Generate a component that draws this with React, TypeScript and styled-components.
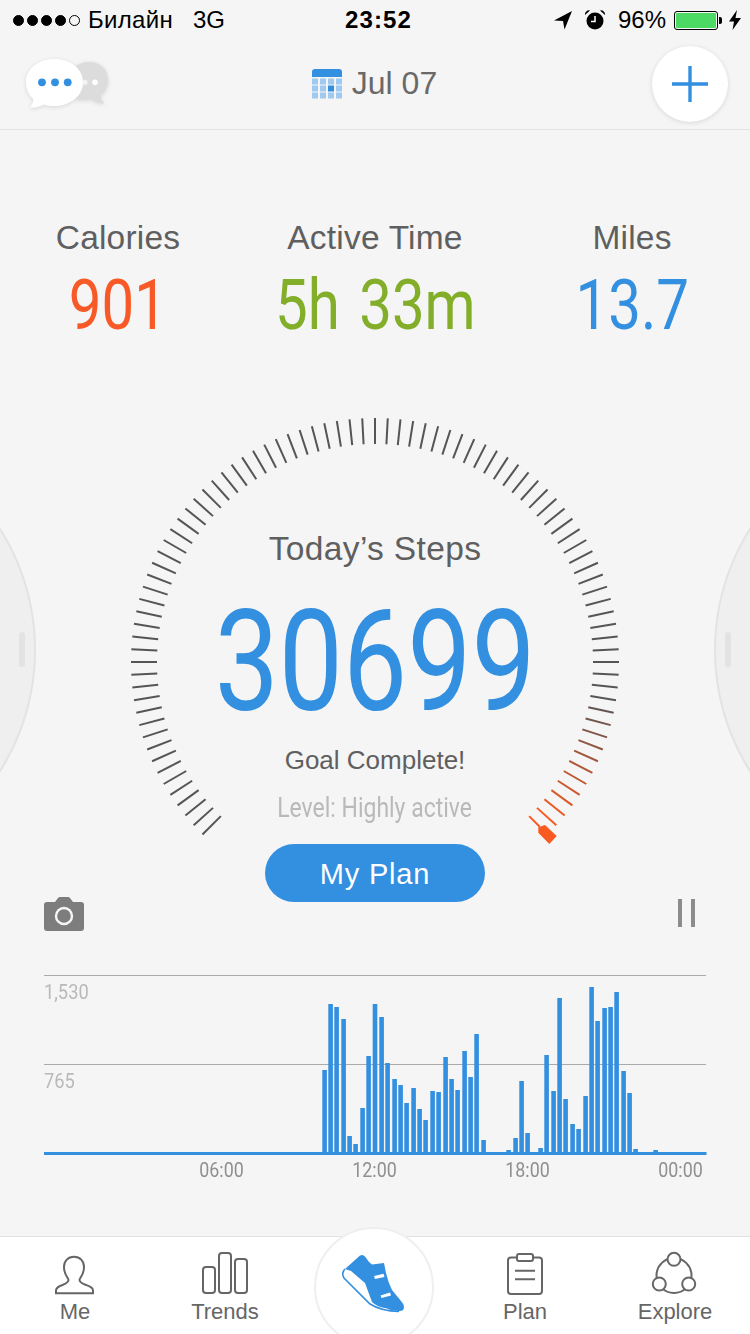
import React from 'react'
import styled, {createGlobalStyle} from 'styled-components'

const BLUE = '#338fe0'
const TEXT = '#5f5f5f'
const FONT = `"Liberation Sans", Arial, sans-serif`
const NUMBER_FONT = `Roboto, "Liberation Sans", sans-serif`

const GlobalStyle = createGlobalStyle`
    html, body {
        margin: 0;
        padding: 0;
        background: #f5f5f5;
    }
`

const Page = styled.div`
    width: 750px;
    height: 1334px;
    background: #f5f5f5;
    display: flex;
    flex-direction: column;
    overflow: hidden;
    font-family: ${FONT};
    color: ${TEXT};
`

/* status bar */
const StatusBar = styled.div`
    height: 40px;
    flex-shrink: 0;
    display: flex;
    align-items: center;
    justify-content: space-between;
    padding: 0 9px 0 13px;
    box-sizing: border-box;
    font-size: 24px;
    color: #000;
    position: relative;
`
const StatusGroup = styled.div`
    display: flex;
    align-items: center;
`
const SignalDot = styled.span<{$empty?: boolean}>`
    width: 11px;
    height: 11px;
    margin-right: 3px;
    border-radius: 50%;
    box-sizing: border-box;
    border: 1px solid #000;
    background: ${p => (p.$empty ? 'transparent' : '#000')};
`
const Carrier = styled.span`
    margin-left: 5px;
    letter-spacing: 0.3px;
`
const Network = styled.span`
    margin-left: 20px;
`
const Clock = styled.span`
    position: absolute;
    left: 345px;
    font-weight: 700;
    letter-spacing: 1.1px;
`
const BatteryText = styled.span`
    margin: 0 8px 0 12px;
`
const BatteryShell = styled.span`
    width: 44px;
    height: 19px;
    box-sizing: border-box;
    border: 1px solid #000;
    border-radius: 3px;
    padding: 1px;
    display: flex;
    position: relative;
`
const BatteryLevel = styled.span`
    flex: 1;
    background: #4cd964;
    border-radius: 1px;
`
const BatteryNub = styled.span`
    width: 3px;
    height: 7px;
    background: #000;
    border-radius: 0 2px 2px 0;
    margin: 0 7px 0 1px;
`

/* header */
const Header = styled.div`
    height: 90px;
    flex-shrink: 0;
    box-sizing: border-box;
    border-bottom: 1px solid #e2e2e2;
    display: grid;
    grid-template-columns: 1fr auto 1fr;
    align-items: center;
    padding: 0 22px 0 20px;
`
const BubbleIcon = styled.svg`
    display: block;
    margin-top: 2px;
    filter: drop-shadow(0 1px 2px rgba(0, 0, 0, 0.12));
`
const DateBox = styled.div`
    display: flex;
    align-items: center;
    gap: 10px;
    margin: -2px 0 0 1px;
    font-size: 32px;
    color: #696969;
`
const PlusButton = styled.button`
    justify-self: end;
    width: 76px;
    height: 76px;
    padding: 0;
    border: 0;
    border-radius: 50%;
    background: #fff;
    box-shadow: 0 1px 5px rgba(0, 0, 0, 0.12);
    display: flex;
    align-items: center;
    justify-content: center;
    margin-top: -2px;
`

/* stats */
const Stats = styled.div`
    height: 270px;
    flex-shrink: 0;
    box-sizing: border-box;
    padding-top: 88px;
    display: grid;
    grid-template-columns: repeat(3, 257px);
    justify-content: center;
    align-content: start;
`
const Stat = styled.div`
    display: flex;
    flex-direction: column;
    align-items: center;
`
const StatLabel = styled.div`
    font-size: 33.5px;
    line-height: 40px;
    letter-spacing: 0.2px;
    color: ${TEXT};
`
const StatValue = styled.div<{$color: string}>`
    margin-top: 9px;
    font-family: ${NUMBER_FONT};
    font-size: 71px;
    line-height: 76px;
    white-space: nowrap;
    word-spacing: 6px;
    color: ${p => p.$color};
    transform: scaleX(0.82);
`

/* gauge */
const GaugeSection = styled.div`
    position: relative;
    height: 502px;
    flex-shrink: 0;
    box-sizing: border-box;
    padding-top: 129px;
    display: flex;
    flex-direction: column;
    align-items: center;
`
const Dial = styled.svg`
    position: absolute;
    left: 0;
    top: 0;
`
const SidePeek = styled.div<{$side: 'left' | 'right'}>`
    position: absolute;
    top: 22px;
    ${p => p.$side}: -420px;
    width: 456px;
    height: 456px;
    box-sizing: border-box;
    border-radius: 50%;
    background: #efefef;
    border: 2px solid #e3e3e3;
`
const PeekHandle = styled.span<{$side: 'left' | 'right'}>`
    position: absolute;
    top: 208px;
    ${p => p.$side}: 437px;
    width: 6px;
    height: 35px;
    border-radius: 3px;
    background: #e3e3e3;
`
const GaugeTitle = styled.div`
    font-size: 33.5px;
    line-height: 40px;
    letter-spacing: 0.35px;
    position: relative;
`
const StepCount = styled.div`
    margin-top: 33px;
    font-family: ${NUMBER_FONT};
    font-size: 141px;
    line-height: 120px;
    color: ${BLUE};
    transform: scaleX(0.81);
    position: relative;
`
const GoalText = styled.div`
    margin-top: 22px;
    font-size: 26px;
    line-height: 32px;
    position: relative;
`
const LevelText = styled.div`
    margin-top: 16px;
    font-family: ${NUMBER_FONT};
    font-size: 27px;
    line-height: 32px;
    color: #b9b9b9;
    white-space: nowrap;
    transform: scaleX(0.85);
    position: relative;
`
const PlanButton = styled.button`
    margin-top: 20px;
    width: 220px;
    height: 58px;
    flex-shrink: 0;
    padding: 2px 0 0;
    border: 0;
    border-radius: 29px;
    background: ${BLUE};
    color: #fff;
    font-family: ${FONT};
    font-size: 29px;
    letter-spacing: 0.8px;
    position: relative;
`

/* toolbar */
const Toolbar = styled.div`
    margin-top: -5px;
    height: 35px;
    flex-shrink: 0;
    display: flex;
    align-items: center;
    justify-content: space-between;
    padding: 0 55px 0 44px;
`
const PauseIcon = styled.div`
    display: flex;
    gap: 8.5px;
    margin-top: -3px;
`
const PauseBar = styled.span`
    width: 4.5px;
    height: 28px;
    background: #8c8c8c;
`

/* chart */
const ChartBox = styled.div`
    position: relative;
    margin-top: 38px;
    height: 190px;
    flex-shrink: 0;
`
const ChartSvg = styled.svg`
    display: block;
`
const YLabel = styled.span<{$top: number}>`
    position: absolute;
    left: 44px;
    top: ${p => p.$top}px;
    font-family: ${NUMBER_FONT};
    font-size: 21px;
    line-height: 24px;
    color: #b9b9b9;
    transform: scaleX(0.87);
    transform-origin: left center;
`
const TimeAxis = styled.div`
    margin-top: -2px;
    padding-left: 145px;
    display: grid;
    grid-template-columns: repeat(4, 153px);
`
const TimeLabel = styled.span`
    text-align: center;
    font-family: ${NUMBER_FONT};
    font-size: 21px;
    line-height: 24px;
    color: #8f8f8f;
    transform: scaleX(0.85);
`

/* bottom nav */
const Nav = styled.div`
    margin-top: auto;
    height: 98px;
    flex-shrink: 0;
    box-sizing: border-box;
    background: #fff;
    border-top: 1px solid #e2e2e2;
    display: grid;
    grid-template-columns: repeat(5, 150px);
    align-items: start;
`
const NavItem = styled.div`
    padding-top: 13px;
    display: flex;
    flex-direction: column;
    align-items: center;
`
const NavLabel = styled.span`
    font-size: 22px;
    line-height: 24px;
    color: #666;
`
const ShoeButton = styled.div`
    justify-self: center;
    margin: -10px 2px 0 0;
    width: 120px;
    height: 120px;
    box-sizing: border-box;
    padding-top: 11px;
    border-radius: 50%;
    background: #fff;
    border: 2px solid #efefef;
    display: flex;
    justify-content: center;
    align-items: flex-start;
`

const CENTER_X = 375
const CENTER_Y = 262

const tickColor = (i: number) => {
    // the last ticks fade from grey into the orange of the marker
    const t = Math.min(1, Math.max(0, (i - 78) / 11))
    const mix = (a: number, b: number) => Math.round(a + (b - a) * t)
    return `rgb(${mix(85, 248)},${mix(85, 90)},${mix(85, 34)})`
}

const ticks = Array.from({length: 91}, (_, i) => {
    const a = ((i * 3 - 135) * Math.PI) / 180
    const outer = i === 90 ? 218 + 15 : 244
    return {
        x1: CENTER_X + Math.sin(a) * outer,
        y1: CENTER_Y - Math.cos(a) * outer,
        x2: CENTER_X + Math.sin(a) * 218,
        y2: CENTER_Y - Math.cos(a) * 218,
        color: i === 90 ? '#f85a22' : tickColor(i),
    }
})

const bars: [number, number][] = [
    [324.6, 1070], [330.6, 1004], [336.6, 1007], [343.6, 1019], [349.6, 1136], [355.6, 1144],
    [362.6, 1108], [368.6, 1056], [375, 1004], [381.6, 1017], [387.6, 1063], [394.6, 1079],
    [400.6, 1085], [406.6, 1103], [413.6, 1088], [419.6, 1109], [425.6, 1120], [432.6, 1091],
    [438.6, 1092], [445.6, 1057], [451.6, 1079], [457.6, 1090], [464.6, 1051], [470.6, 1077],
    [476.6, 1034], [483.6, 1140], [508.6, 1150], [515.6, 1138], [521.6, 1081], [527.6, 1133],
    [540.6, 1148], [546.6, 1055], [553.6, 1091], [559.6, 998], [565.6, 1099], [572.6, 1124],
    [578.6, 1129], [585.6, 1096], [591.6, 987], [597.6, 1021], [604.6, 1008], [610.6, 1007],
    [616.6, 992], [623.6, 1071], [629.6, 1093], [635.6, 1149], [655.6, 1150],
]

const STROKE = {fill: 'none', stroke: '#666', strokeWidth: 2} as const

const App = () => {
    return (
        <Page>
            <GlobalStyle />
            <StatusBar>
                <StatusGroup>
                    <SignalDot />
                    <SignalDot />
                    <SignalDot />
                    <SignalDot />
                    <SignalDot $empty />
                    <Carrier>Билайн</Carrier>
                    <Network>3G</Network>
                </StatusGroup>
                <Clock>23:52</Clock>
                <StatusGroup>
                    <svg width="20" height="20" viewBox="0 0 20 20">
                        <path d="M19 1 L1 10.5 L10 11 L11.5 19.5 Z" fill="#000" />
                    </svg>
                    <svg width="22" height="22" viewBox="0 0 22 22" style={{marginLeft: 11}}>
                        <circle cx="11" cy="12" r="8.5" fill="#000" />
                        <path d="M11 7 V12.5 H7" fill="none" stroke="#fff" strokeWidth="1.5" />
                        <path d="M1 6 A4 4 0 0 1 6 1.5 Z M21 6 A4 4 0 0 0 16 1.5 Z" fill="#000" />
                    </svg>
                    <BatteryText>96%</BatteryText>
                    <BatteryShell>
                        <BatteryLevel />
                    </BatteryShell>
                    <BatteryNub />
                    <svg width="12" height="20" viewBox="0 0 12 20">
                        <path d="M8 0 L0 11.5 H5 L3.5 20 L12 8 H6.5 Z" fill="#000" />
                    </svg>
                </StatusGroup>
            </StatusBar>

            <Header>
                <BubbleIcon width="95" height="60" viewBox="0 0 95 60">
                    <path d="M56 10 C68 2 88 6 88 24 C88 32 84 37 80 40 C81 43 83 46 84 48 C78 47 74 45 71 43 C64 45 58 44 54 42 Z" fill="#dcdcdc" />
                    <circle cx="65" cy="26.3" r="2.6" fill="#f3f3f3" />
                    <circle cx="75" cy="26.3" r="2.8" fill="#fff" />
                    <path d="M34.5 3 C51 3 63 13 63 26.5 C63 40 50 50 34.5 50 C30 50 27 49.5 24 48.5 C20 51 15 51.5 10 51.5 C12 48.5 14 45.5 13 42.5 C8.5 38.5 6 33 6 26.5 C6 13 18 3 34.5 3 Z" fill="#fff" />
                    <circle cx="22" cy="26.3" r="3.9" fill={BLUE} />
                    <circle cx="35" cy="26.3" r="3.9" fill={BLUE} />
                    <circle cx="47.7" cy="26.3" r="3.9" fill={BLUE} />
                </BubbleIcon>
                <DateBox>
                    <svg width="30" height="30" viewBox="0 0 30 30">
                        <path d="M0 8 V3 A3 3 0 0 1 3 0 H27 A3 3 0 0 1 30 3 V8 Z" fill={BLUE} />
                        {[0, 1, 2].map(row =>
                            [0, 1, 2, 3].map(col => (
                                <rect
                                    key={`${row}-${col}`}
                                    x={col * 8}
                                    y={9.5 + row * 7}
                                    width="6"
                                    height="6"
                                    fill={row === 1 && col === 2 ? BLUE : '#a0c9ef'}
                                />
                            ))
                        )}
                    </svg>
                    <span>Jul 07</span>
                </DateBox>
                <PlusButton>
                    <svg width="38" height="38" viewBox="0 0 38 38">
                        <path d="M19 1 V37 M1 19 H37" stroke={BLUE} strokeWidth="3.4" fill="none" />
                    </svg>
                </PlusButton>
            </Header>

            <Stats>
                <Stat>
                    <StatLabel>Calories</StatLabel>
                    <StatValue $color="#f75a26">901</StatValue>
                </Stat>
                <Stat>
                    <StatLabel>Active Time</StatLabel>
                    <StatValue $color="#82ae2a">5h 33m</StatValue>
                </Stat>
                <Stat>
                    <StatLabel>Miles</StatLabel>
                    <StatValue $color={BLUE}>13.7</StatValue>
                </Stat>
            </Stats>

            <GaugeSection>
                <SidePeek $side="left">
                    <PeekHandle $side="left" />
                </SidePeek>
                <SidePeek $side="right">
                    <PeekHandle $side="right" />
                </SidePeek>
                <Dial width="750" height="502" viewBox="0 0 750 502">
                    {ticks.map((t, i) => (
                        <line key={i} x1={t.x1} y1={t.y1} x2={t.x2} y2={t.y2} stroke={t.color} strokeWidth="2" />
                    ))}
                    <path d="M538.3 427.3 L545 425 L556.7 436 L549.3 444 L538.3 432.7 Z" fill="#f85a22" />
                </Dial>
                <GaugeTitle>Today’s Steps</GaugeTitle>
                <StepCount>30699</StepCount>
                <GoalText>Goal Complete!</GoalText>
                <LevelText>Level: Highly active</LevelText>
                <PlanButton>My Plan</PlanButton>
            </GaugeSection>

            <Toolbar>
                <svg width="40" height="35" viewBox="0 0 40 35">
                    <path d="M3 5 H11 L14 1 Q15 0 16 0 H24 Q25 0 26 1 L29 5 H37 Q40 5 40 8 V31 Q40 34 37 34 H3 Q0 34 0 31 V8 Q0 5 3 5 Z" fill="#7d7d7d" />
                    <circle cx="20" cy="19" r="8" fill="none" stroke="#f5f5f5" strokeWidth="2.4" />
                </svg>
                <PauseIcon>
                    <PauseBar />
                    <PauseBar />
                </PauseIcon>
            </Toolbar>

            <ChartBox>
                <ChartSvg width="750" height="190" viewBox="0 970 750 190">
                    <line x1="44" x2="706" y1="975.5" y2="975.5" stroke="#aaa" strokeWidth="1" />
                    <line x1="44" x2="706" y1="1064.5" y2="1064.5" stroke="#aaa" strokeWidth="1" />
                    {bars.map(([x, top]) => (
                        <rect key={x} x={x - 2.3} y={top} width="4.6" height={1153 - top} fill={BLUE} />
                    ))}
                    <rect x="44" y="1152" width="662.5" height="3" fill={BLUE} />
                </ChartSvg>
                <YLabel $top={10}>1,530</YLabel>
                <YLabel $top={99}>765</YLabel>
            </ChartBox>
            <TimeAxis>
                <TimeLabel>06:00</TimeLabel>
                <TimeLabel>12:00</TimeLabel>
                <TimeLabel>18:00</TimeLabel>
                <TimeLabel>00:00</TimeLabel>
            </TimeAxis>

            <Nav>
                <NavItem>
                    <svg width="50" height="50" viewBox="0 0 50 50">
                        <path {...STROKE} d="M6 43.3 H43 V40.5 C43 37.5 40 36.5 36 35 C32 33.5 29.5 32 29.5 30 C29.5 28 34 25 34 17 C34 11 30 6.7 24 6.7 C18 6.7 14 11 14 17 C14 25 18.5 28 18.5 30 C18.5 32 16 33.5 12.5 35 C8.5 36.5 6 37.5 6 40.5 Z" />
                    </svg>
                    <NavLabel>Me</NavLabel>
                </NavItem>
                <NavItem>
                    <svg width="50" height="50" viewBox="0 0 50 50">
                        <rect {...STROKE} x="3" y="17" width="12" height="26" rx="3" />
                        <rect {...STROKE} x="19" y="3" width="12" height="40" rx="3" />
                        <rect {...STROKE} x="35" y="9" width="12" height="34" rx="3" />
                    </svg>
                    <NavLabel>Trends</NavLabel>
                </NavItem>
                <ShoeButton>
                    <svg width="90" height="90" viewBox="0 0 90 90">
                        <path d="M16 29 L31 15.5 Q34 14 36 16.5 L40 22 L43 24.5 L55 23 L57 33 Q59 42 63 50 L72 61 Q75 64 75 67 Q75 71.5 70 71 Q62 71 58 68.5 Q48 67 43 62 L36 43 L22 31 Z" fill={BLUE} />
                        <path d="M16 29 Q12 33 15 38 L41 64 Q52 71 70 71.5" fill="none" stroke={BLUE} strokeWidth="1.6" />
                        <path d="M45 36 L54.5 33.8 L55.5 37 L46 39 Z M51.5 55.5 L61 52.5 L62 55.5 L52.5 58 Z" fill="#fff" />
                    </svg>
                </ShoeButton>
                <NavItem>
                    <svg width="50" height="50" viewBox="0 0 50 50">
                        <rect {...STROKE} x="8" y="7.5" width="34" height="36.5" rx="3" />
                        <rect x="17" y="4" width="16" height="7" rx="2" fill="#fff" stroke="#666" strokeWidth="2" />
                        <path {...STROKE} d="M15 20.7 H35 M15 29.3 H35" />
                    </svg>
                    <NavLabel>Plan</NavLabel>
                </NavItem>
                <NavItem>
                    <svg width="50" height="50" viewBox="0 0 50 50">
                        <circle {...STROKE} cx="24" cy="25.5" r="17.5" />
                        <circle cx="24" cy="9.3" r="6.5" fill="#fff" stroke="#666" strokeWidth="2" />
                        <circle cx="9.3" cy="34" r="6.5" fill="#fff" stroke="#666" strokeWidth="2" />
                        <circle cx="38.7" cy="34" r="6.5" fill="#fff" stroke="#666" strokeWidth="2" />
                    </svg>
                    <NavLabel>Explore</NavLabel>
                </NavItem>
            </Nav>
        </Page>
    )
}

export default App
